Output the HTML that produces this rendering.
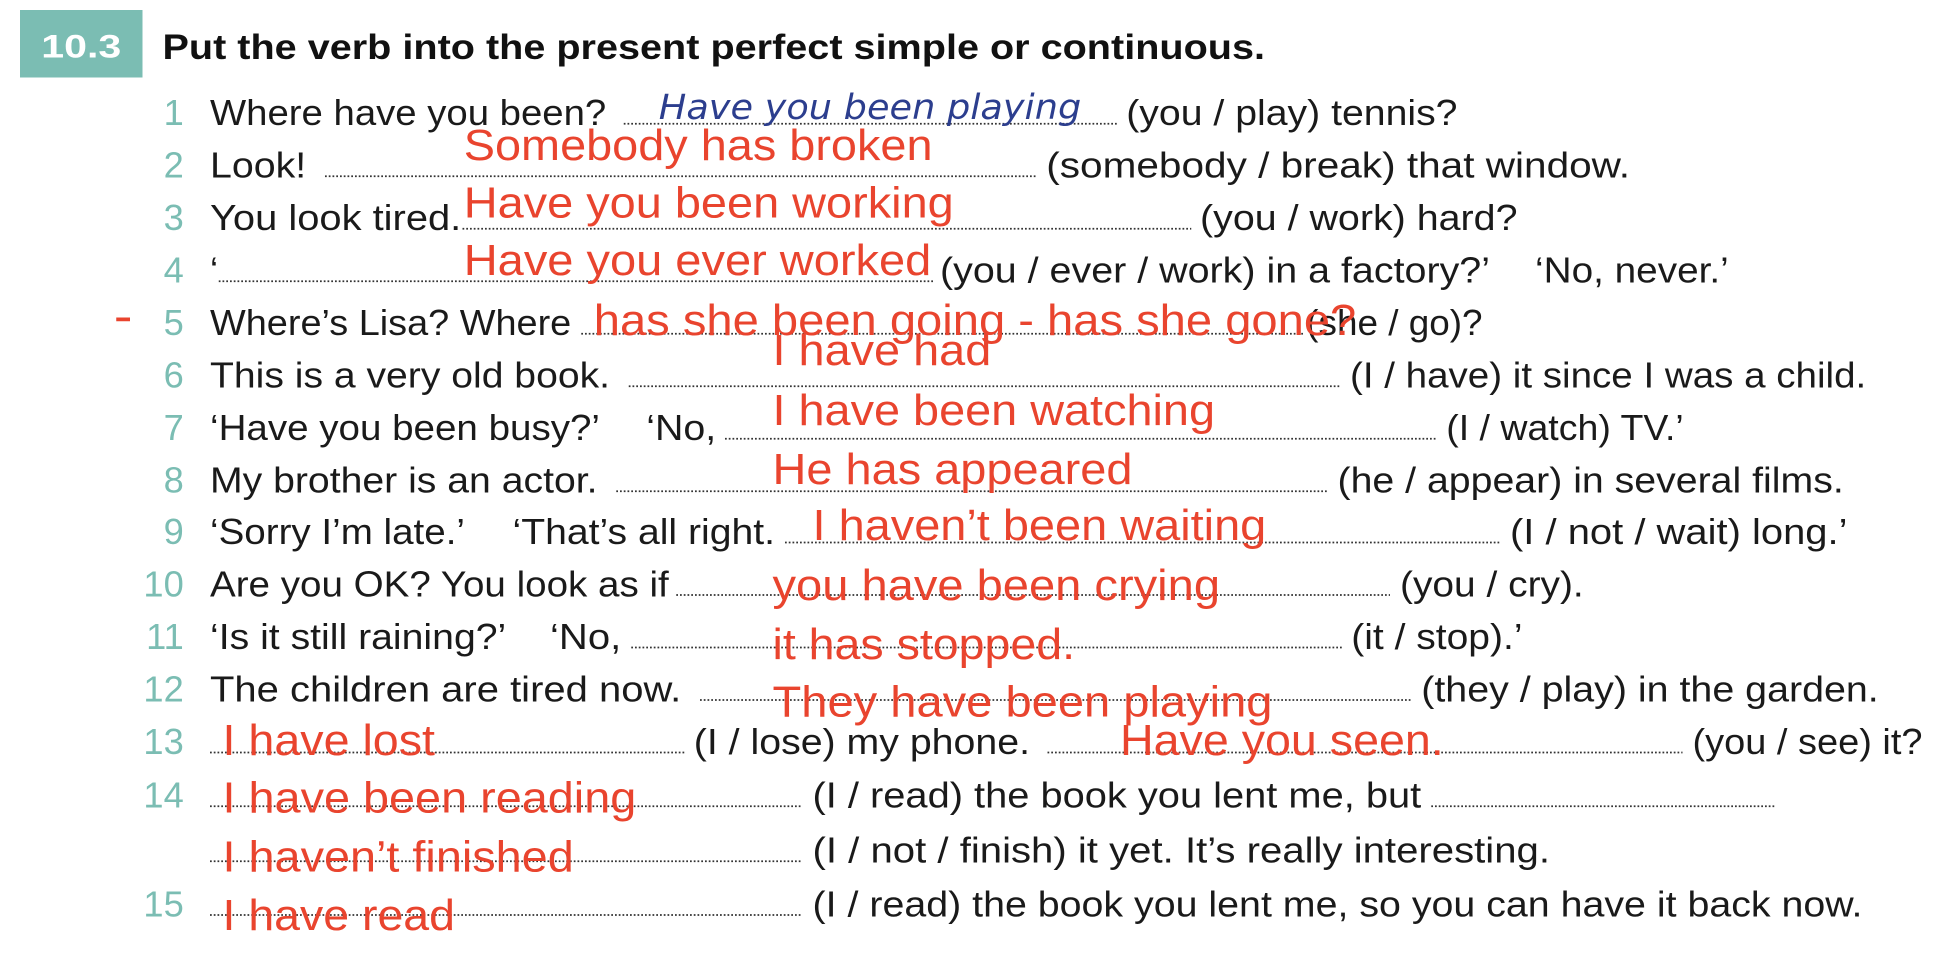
<!DOCTYPE html>
<html><head><meta charset="utf-8"><style>
html,body{margin:0;padding:0;background:#fff;width:1950px;height:980px;overflow:hidden}
svg{display:block}
.b{font-family:"Liberation Sans",sans-serif;font-size:29px;fill:#1a1a1a}
.n{font-family:"Liberation Sans",sans-serif;font-size:29px;fill:#7bbdb3}
.r{font-family:"Liberation Sans",sans-serif;font-size:35px;fill:#e9442e}
.d{stroke:#333;stroke-width:1.4;stroke-dasharray:1.4 1.6}
</style></head><body>
<svg width="1950" height="980" viewBox="0 0 1560 784" xmlns="http://www.w3.org/2000/svg">
<rect x="16" y="8" width="98" height="54" fill="#7bbdb3"/>
<text x="33" y="46" font-family="Liberation Sans,sans-serif" font-weight="bold" font-size="26" fill="#fff" textLength="64" lengthAdjust="spacingAndGlyphs">10.3</text>
<text x="130" y="47" font-family="Liberation Sans,sans-serif" font-weight="bold" font-size="28" fill="#111" textLength="882" lengthAdjust="spacingAndGlyphs">Put the verb into the present perfect simple or continuous.</text>

<g class="n" text-anchor="end">
<text x="147" y="100">1</text><text x="147" y="142">2</text><text x="147" y="184">3</text><text x="147" y="226">4</text><text x="147" y="268">5</text><text x="147" y="310">6</text><text x="147" y="352">7</text><text x="147" y="394">8</text><text x="147" y="435">9</text><text x="147" y="477">10</text><text x="147" y="519">11</text><text x="147" y="561">12</text><text x="147" y="603">13</text><text x="147" y="646">14</text><text x="147" y="733">15</text>
</g>
<rect x="93" y="254" width="11" height="3" fill="#e9442e"/>

<g class="d">
<line x1="499" y1="99" x2="895" y2="99"/>
<line x1="260" y1="141" x2="830" y2="141"/>
<line x1="370" y1="183" x2="953" y2="183"/>
<line x1="175" y1="225" x2="748" y2="225"/>
<line x1="465" y1="267" x2="1043" y2="267"/>
<line x1="503" y1="309" x2="1073" y2="309"/>
<line x1="580" y1="351" x2="1150" y2="351"/>
<line x1="493" y1="393" x2="1063" y2="393"/>
<line x1="628" y1="434" x2="1200" y2="434"/>
<line x1="541" y1="476" x2="1112" y2="476"/>
<line x1="505" y1="518" x2="1074" y2="518"/>
<line x1="560" y1="560" x2="1130" y2="560"/>
<line x1="168" y1="602" x2="548" y2="602"/>
<line x1="838" y1="602" x2="1346" y2="602"/>
<line x1="168" y1="645" x2="642" y2="645"/>
<line x1="1145" y1="645" x2="1420" y2="645"/>
<line x1="168" y1="689" x2="642" y2="689"/>
<line x1="168" y1="732" x2="642" y2="732"/>
</g>

<g class="b" lengthAdjust="spacingAndGlyphs">
<text x="168" y="100" textLength="317" lengthAdjust="spacingAndGlyphs">Where have you been?</text>
<text x="901" y="100" textLength="265" lengthAdjust="spacingAndGlyphs">(you / play) tennis?</text>
<text x="168" y="142" textLength="77" lengthAdjust="spacingAndGlyphs">Look!</text>
<text x="837" y="142" textLength="467" lengthAdjust="spacingAndGlyphs">(somebody / break) that window.</text>
<text x="168" y="184" textLength="201" lengthAdjust="spacingAndGlyphs">You look tired.</text>
<text x="960" y="184" textLength="254" lengthAdjust="spacingAndGlyphs">(you / work) hard?</text>
<text x="168" y="226">‘</text>
<text x="752" y="226" textLength="440" lengthAdjust="spacingAndGlyphs">(you / ever / work) in a factory?’</text>
<text x="1228" y="226" textLength="155" lengthAdjust="spacingAndGlyphs">‘No, never.’</text>
<text x="168" y="268" textLength="289" lengthAdjust="spacingAndGlyphs">Where’s Lisa?  Where</text>
<text x="1045" y="268" textLength="141" lengthAdjust="spacingAndGlyphs">(she / go)?</text>
<text x="168" y="310" textLength="320" lengthAdjust="spacingAndGlyphs">This is a very old book.</text>
<text x="1080" y="310" textLength="413" lengthAdjust="spacingAndGlyphs">(I / have) it since I was a child.</text>
<text x="168" y="352" textLength="312" lengthAdjust="spacingAndGlyphs">‘Have you been busy?’</text>
<text x="517" y="352" textLength="56" lengthAdjust="spacingAndGlyphs">‘No,</text>
<text x="1157" y="352" textLength="190" lengthAdjust="spacingAndGlyphs">(I / watch) TV.’</text>
<text x="168" y="394" textLength="310" lengthAdjust="spacingAndGlyphs">My brother is an actor.</text>
<text x="1070" y="394" textLength="405" lengthAdjust="spacingAndGlyphs">(he / appear) in several films.</text>
<text x="168" y="435" textLength="204" lengthAdjust="spacingAndGlyphs">‘Sorry I’m late.’</text>
<text x="410" y="435" textLength="210" lengthAdjust="spacingAndGlyphs">‘That’s all right.</text>
<text x="1208" y="435" textLength="270" lengthAdjust="spacingAndGlyphs">(I / not / wait) long.’</text>
<text x="168" y="477" textLength="367" lengthAdjust="spacingAndGlyphs">Are you OK?  You look as if</text>
<text x="1120" y="477" textLength="147" lengthAdjust="spacingAndGlyphs">(you / cry).</text>
<text x="168" y="519" textLength="237" lengthAdjust="spacingAndGlyphs">‘Is it still raining?’</text>
<text x="440" y="519" textLength="57" lengthAdjust="spacingAndGlyphs">‘No,</text>
<text x="1081" y="519" textLength="137" lengthAdjust="spacingAndGlyphs">(it / stop).’</text>
<text x="168" y="561" textLength="377" lengthAdjust="spacingAndGlyphs">The children are tired now.</text>
<text x="1137" y="561" textLength="366" lengthAdjust="spacingAndGlyphs">(they / play) in the garden.</text>
<text x="555" y="603" textLength="269" lengthAdjust="spacingAndGlyphs">(I / lose) my phone.</text>
<text x="1354" y="603" textLength="184" lengthAdjust="spacingAndGlyphs">(you / see) it?</text>
<text x="650" y="646" textLength="487" lengthAdjust="spacingAndGlyphs">(I / read) the book you lent me, but</text>
<text x="650" y="690" textLength="590" lengthAdjust="spacingAndGlyphs">(I / not / finish) it yet.  It’s really interesting.</text>
<text x="650" y="733" textLength="840" lengthAdjust="spacingAndGlyphs">(I / read) the book you lent me, so you can have it back now.</text>
</g>

<text x="527" y="95" font-family="DejaVu Sans,sans-serif" font-style="italic" font-size="28" fill="#2c3e8e" textLength="338" lengthAdjust="spacingAndGlyphs">Have you been playing</text>

<g class="r">
<text x="371" y="128" textLength="375" lengthAdjust="spacingAndGlyphs">Somebody has broken</text>
<text x="371" y="174" textLength="392" lengthAdjust="spacingAndGlyphs">Have you been working</text>
<text x="371" y="220" textLength="374" lengthAdjust="spacingAndGlyphs">Have you ever worked</text>
<text x="475" y="268" textLength="610" lengthAdjust="spacingAndGlyphs">has she been going - has she gone?</text>
<text x="618" y="292" textLength="175" lengthAdjust="spacingAndGlyphs">I have had</text>
<text x="618" y="340" textLength="354" lengthAdjust="spacingAndGlyphs">I have been watching</text>
<text x="618" y="387" textLength="288" lengthAdjust="spacingAndGlyphs">He has appeared</text>
<text x="650" y="432" textLength="363" lengthAdjust="spacingAndGlyphs">I haven’t been waiting</text>
<text x="618" y="480" textLength="358" lengthAdjust="spacingAndGlyphs">you have been crying</text>
<text x="618" y="527" textLength="242" lengthAdjust="spacingAndGlyphs">it has stopped.</text>
<text x="618" y="573" textLength="400" lengthAdjust="spacingAndGlyphs">They have been playing</text>
<text x="178" y="604" textLength="170" lengthAdjust="spacingAndGlyphs">I have lost</text>
<text x="896" y="604" textLength="259" lengthAdjust="spacingAndGlyphs">Have you seen.</text>
<text x="178" y="650" textLength="331" lengthAdjust="spacingAndGlyphs">I have been reading</text>
<text x="178" y="697" textLength="281" lengthAdjust="spacingAndGlyphs">I haven’t finished</text>
<text x="178" y="744" textLength="186" lengthAdjust="spacingAndGlyphs">I have read</text>
</g>
</svg>
</body></html>
